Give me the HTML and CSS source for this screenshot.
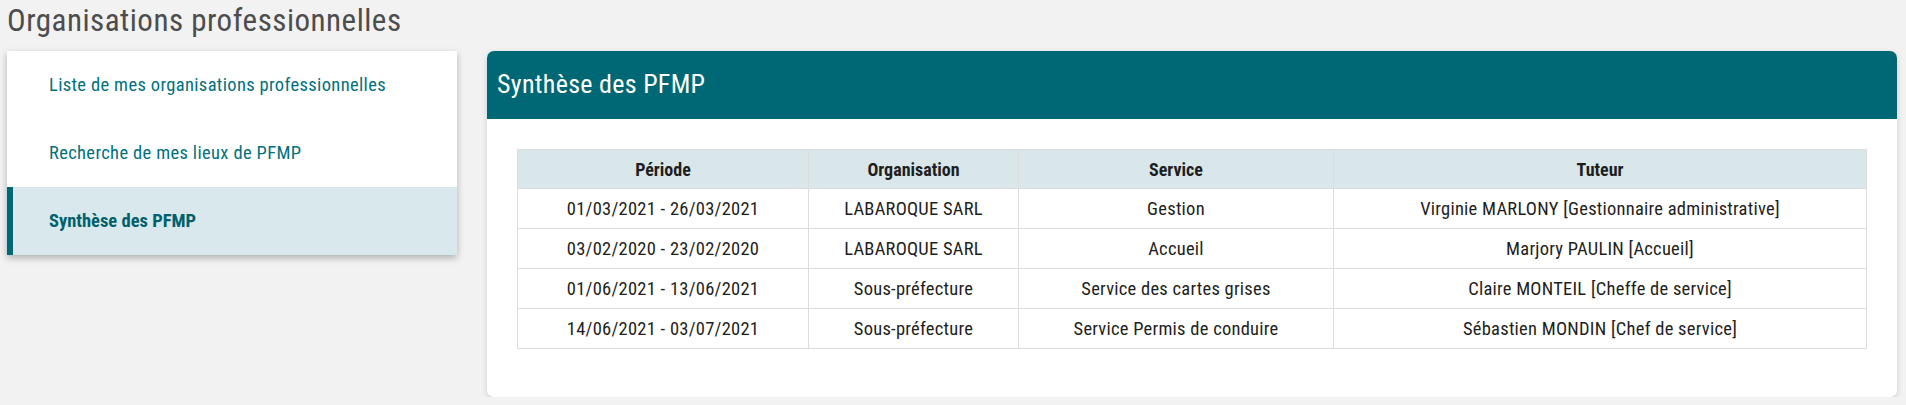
FILE: index.html
```html
<!DOCTYPE html>
<html lang="fr">
<head>
    <meta charset="UTF-8">
    <title>Organisations professionnelles</title>
    <link rel="stylesheet" href="styles.css">
</head>
<body>
    <h1 class="page-title">Organisations professionnelles</h1>
    <div class="layout">
        <ul class="side-menu">
            <li class="menu-item"><a href="#">Liste de mes organisations professionnelles</a></li>
            <li class="menu-item"><a href="#">Recherche de mes lieux de PFMP</a></li>
            <li class="menu-item active"><a href="#">Synthèse des PFMP</a></li>
        </ul>
        <div class="card">
            <div class="card-header">Synthèse des PFMP</div>
            <div class="card-body">
                <table class="pfmp-table">
                    <thead>
                        <tr>
                            <th class="col-periode">Période</th>
                            <th class="col-orga">Organisation</th>
                            <th class="col-service">Service</th>
                            <th>Tuteur</th>
                        </tr>
                    </thead>
                    <tbody>
                        <tr>
                            <td>01/03/2021 - 26/03/2021</td>
                            <td>LABAROQUE SARL</td>
                            <td>Gestion</td>
                            <td>Virginie MARLONY [Gestionnaire administrative]</td>
                        </tr>
                        <tr>
                            <td>03/02/2020 - 23/02/2020</td>
                            <td>LABAROQUE SARL</td>
                            <td>Accueil</td>
                            <td>Marjory PAULIN [Accueil]</td>
                        </tr>
                        <tr>
                            <td>01/06/2021 - 13/06/2021</td>
                            <td>Sous-préfecture</td>
                            <td>Service des cartes grises</td>
                            <td>Claire MONTEIL [Cheffe de service]</td>
                        </tr>
                        <tr>
                            <td>14/06/2021 - 03/07/2021</td>
                            <td>Sous-préfecture</td>
                            <td>Service Permis de conduire</td>
                            <td>Sébastien MONDIN [Chef de service]</td>
                        </tr>
                    </tbody>
                </table>
            </div>
        </div>
    </div>
</body>
</html>
```

FILE: styles.css
```css
body {
    margin: 0;
    padding: 0 9px 0 7px;
    background-color: #f2f2f2;
    font-family: "Roboto Condensed", "Liberation Sans Narrow", "DejaVu Sans Condensed", Roboto, sans-serif;
    color: #1e1e1e;
}
.page-title {
    margin: 0;
    padding-top: 4px;
    height: 47px;
    font-size: 31px;
    line-height: 34px;
    letter-spacing: 0.5px;
    font-weight: 400;
    color: #4d4d4d;
}
.layout {
    display: flex;
    align-items: flex-start;
    gap: 30px;
}

/* menu de gauche */
.side-menu {
    list-style: none;
    margin: 0;
    padding: 0;
    width: 450px;
    flex-shrink: 0;
    background-color: #fff;
    box-shadow: 0 3px 7px rgba(0, 0, 0, 0.28);
}
.menu-item a {
    display: block;
    height: 68px;
    line-height: 68px;
    padding-left: 42px;
    font-size: 18.5px;
    letter-spacing: 0.35px;
    color: #00717f;
    text-decoration: none;
}
.menu-item.active a {
    background-color: #d9e8ec;
    border-left: 6px solid #006874;
    padding-left: 36px;
    font-size: 18.5px;
    letter-spacing: 0;
    font-weight: 700;
    color: #00616d;
}

/* carte principale */
.card {
    flex: 1;
    height: 346px;
    background-color: #fff;
    border-radius: 7px;
    box-shadow: 0 2px 6px rgba(0, 0, 0, 0.15);
    overflow: hidden;
}
.card-header {
    height: 68px;
    line-height: 66px;
    padding-left: 10px;
    background-color: #006874;
    color: #fff;
    font-size: 26px;
    letter-spacing: 0.3px;
}
.card-body {
    padding: 30px;
}
.pfmp-table {
    width: 100%;
    border-collapse: collapse;
    font-size: 18.5px;
    letter-spacing: 0.25px;
    text-align: center;
}
.pfmp-table th,
.pfmp-table td {
    border: 1px solid #dcdcdc;
    height: 39px;
    padding: 0 8px;
}
.pfmp-table th {
    background-color: #d9e7eb;
    font-size: 18px;
    letter-spacing: 0;
    font-weight: 700;
    height: 38px;
}
.col-periode { width: 274px; }
.col-orga { width: 193px; }
.col-service { width: 298px; }
```
